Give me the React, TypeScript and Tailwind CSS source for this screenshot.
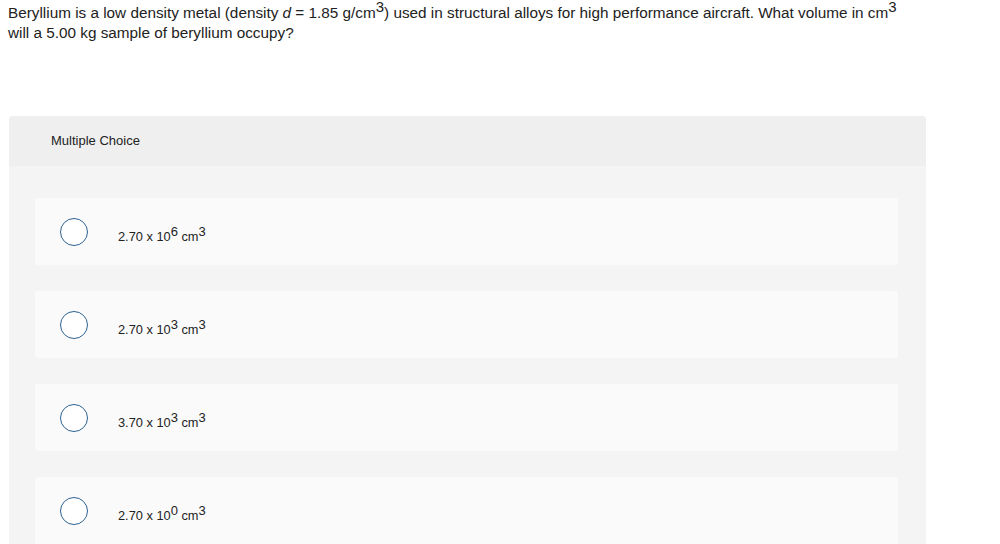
const choices = [
  { lead: '2.70', exp: '6' },
  { lead: '2.70', exp: '3' },
  { lead: '3.70', exp: '3' },
  { lead: '2.70', exp: '0' },
];

function Sup({ children, size }: { children: React.ReactNode; size: 'q' | 'a' }) {
  return (
    <sup className={size === 'q' ? 'static align-[6px] text-[15px] leading-[0]' : 'static align-[5px] text-[13px] leading-[0]'}>
      {children}
    </sup>
  );
}

function Choice({ lead, exp }: { lead: string; exp: string }) {
  return (
    <div className="flex h-[67px] items-center rounded-[3px] bg-[#fafafa] pl-[25px]">
      <span className="h-[28px] w-[28px] shrink-0 rounded-full border-[1.5px] border-[#2c6291] bg-white" />
      <span className="ml-[30px] pt-[10px] text-[12.8px] leading-[16px] text-[#222]">
        {lead} x 10<Sup size="a">{exp}</Sup> cm<Sup size="a">3</Sup>
      </span>
    </div>
  );
}

export default function App() {
  return (
    <div className="min-h-[544px] bg-white font-['Liberation_Sans','Arial',sans-serif] text-[#222]">
      {/* Question */}
      <p className="pl-[8px] pt-[3px] text-[15.3px] leading-[20px]">
        Beryllium is a low density metal (density <i>d</i> = 1.85 g/cm<Sup size="q">3</Sup>) used in structural alloys for high
        performance aircraft. What volume in cm<Sup size="q">3</Sup>
        <br />
        will a 5.00 kg sample of beryllium occupy?
      </p>

      {/* Answer panel */}
      <div className="ml-[9px] mt-[73px] w-[917px] overflow-hidden rounded-t-[4px] bg-[#f4f4f4]">
        <div className="flex h-[50px] items-center bg-[#efefef] pl-[42px] text-[13px]">Multiple Choice</div>
        <div className="flex flex-col gap-[26px] pl-[26px] pr-[28px] pt-[32px] pb-[20px]">
          {choices.map((c, i) => (
            <Choice key={i} lead={c.lead} exp={c.exp} />
          ))}
        </div>
      </div>
    </div>
  );
}
